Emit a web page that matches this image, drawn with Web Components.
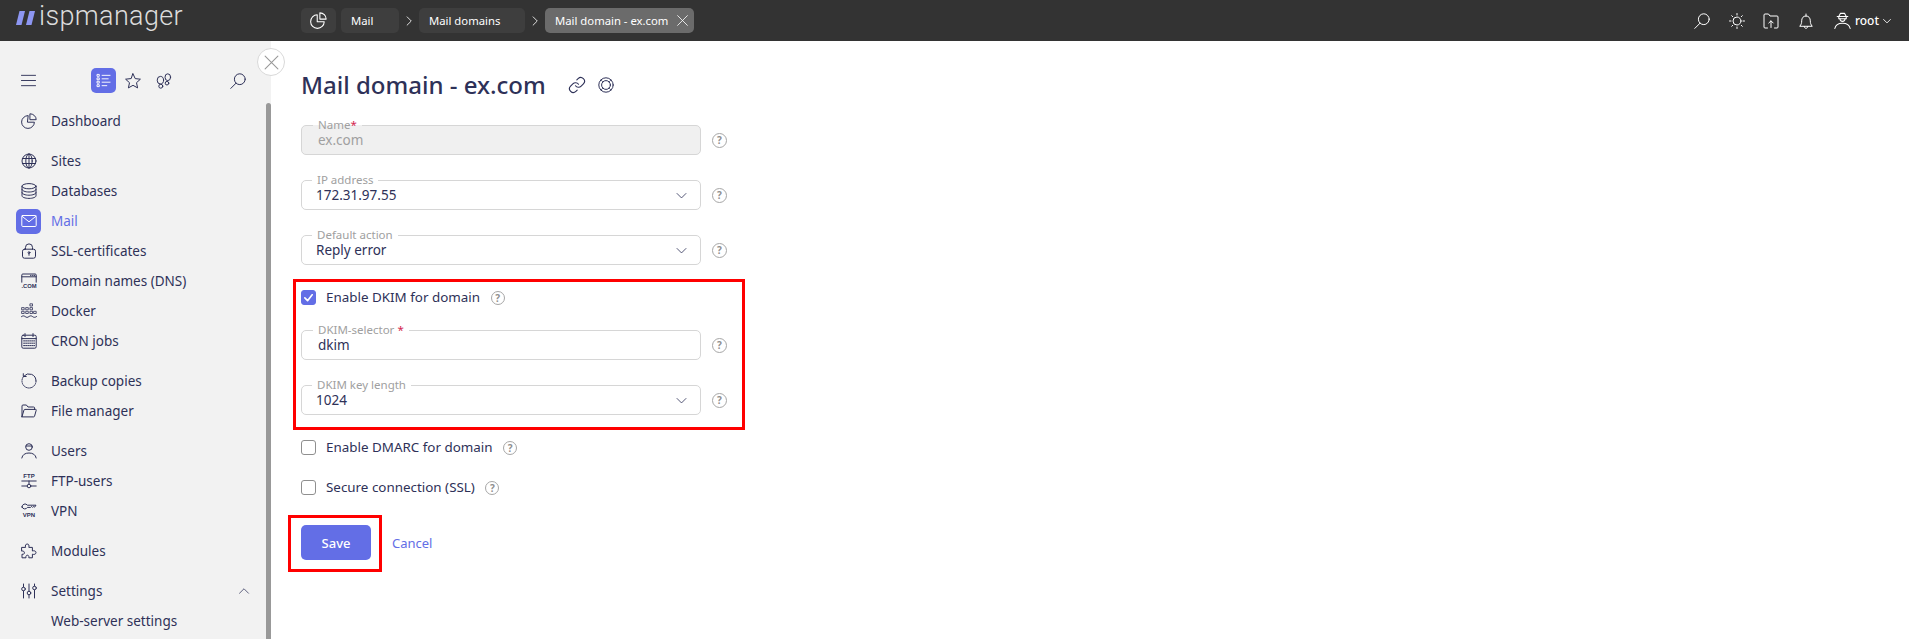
<!DOCTYPE html>
<html lang="en">
<head>
<meta charset="utf-8">
<title>Mail domain - ex.com</title>
<style>
  html, body { margin: 0; height: 100%; overflow: hidden; background: #fff; }
  body { font-family: "Noto Sans", "Liberation Sans", sans-serif; color: #2e3158; }
</style>
</head>
<body>
<isp-app></isp-app>

<script>
// ── Icons ─────────────────────────────────────────────────────────────────

const ICON_LABEL = 'font-family="Liberation Sans, sans-serif" font-weight="700" fill="currentColor" stroke="none"';

const ICONS = {
    pie: '<path d="M6.8 2.6a6.4 6.4 0 1 0 6.6 6.6H6.8z"/><path d="M9.3 .8a5.9 5.9 0 0 1 5.9 5.9H9.3z"/>',
    globe: '<circle cx="8" cy="8" r="7"/><ellipse cx="8" cy="8" rx="3.2" ry="7"/><path d="M8 1v14M1.5 5.5h13M1.5 10.5h13"/>',
    db: '<ellipse cx="8" cy="3.2" rx="7" ry="2.6"/><path d="M1 3.2v9.6c0 1.4 3.1 2.6 7 2.6s7-1.2 7-2.6V3.2M1 6.4c0 1.4 3.1 2.6 7 2.6s7-1.2 7-2.6M1 9.6c0 1.4 3.1 2.6 7 2.6s7-1.2 7-2.6"/>',
    mail: '<rect x=".8" y="2.5" width="14.4" height="11" rx="1"/><path d="M1 3.2l7 5.6 7-5.6"/>',
    lock: '<rect x="1.5" y="6.2" width="13" height="9" rx="2"/><path d="M4.5 6.2V4.4a3.5 3.5 0 0 1 7 0v1.8"/><circle cx="8" cy="9.6" r=".9"/><path d="M8 10.5v1.8"/>',
    dns: `<path d="M.8 9.2V2a1 1 0 0 1 1-1h12.4a1 1 0 0 1 1 1v7.2M.8 3.8h14.4"/><path d="M9.5 2.4h.6M11.5 2.4h.6M13.3 2.4h.5"/>
          <text x=".4" y="15.2" textLength="15.2" lengthAdjust="spacingAndGlyphs" font-size="5.6" ${ICON_LABEL}>.COM</text>`,
    docker: `<g stroke-width=".8"><rect x="9.3" y=".8" width="2.2" height="2.2"/>
             <rect x="1" y="4.6" width="2.2" height="2.2"/><rect x="5.1" y="4.6" width="2.2" height="2.2"/><rect x="9.3" y="4.6" width="2.2" height="2.2"/>
             <rect x="1" y="8.3" width="2.2" height="2.2"/><rect x="5.1" y="8.3" width="2.2" height="2.2"/><rect x="9.3" y="8.3" width="2.2" height="2.2"/><rect x="13" y="8.3" width="2.2" height="2.2"/></g>
             <path d="M.5 13.6c1.3-1 2.4-1 3.7 0s2.4 1 3.7 0 2.4-1 3.7 0 2.4 1 3.9 0"/>`,
    cal: '<rect x=".8" y="2.2" width="14.4" height="13" rx="1.4"/><path d="M.8 5.6h14.4M4 .6v3M12 .6v3"/><path stroke-dasharray="1.2 .9" d="M2.6 7.9h11M2.6 10.2h11M2.6 12.6h11"/>',
    backup: '<path d="M2.8 3.2A7 7 0 0 1 15 8"/><path stroke-dasharray="1 1.1" d="M15 8A7 7 0 0 1 1 8a7 7 0 0 1 1.8-4.8"/><path d="M2.3 .7v2.8h2.9"/>',
    folder: '<path d="M1 13.6V3a1 1 0 0 1 1-1h3.4l1.6 2h5.6a1 1 0 0 1 1 1v1.6"/><path d="M1 13.6L3 7a.9.9 0 0 1 .9-.6h10.6a.7.7 0 0 1 .7.9l-1.7 6a.9.9 0 0 1-.9.6H1z"/>',
    user: '<circle cx="8" cy="4" r="3.3"/><path d="M5 3h6"/><path d="M.8 15c.6-3.4 3.4-5 7.2-5s6.6 1.6 7.2 5"/>',
    ftp: `<text x="8" y="5.4" text-anchor="middle" font-size="6" ${ICON_LABEL}>FTP</text><path d="M.8 8h14.4M.8 13h5.3M9.9 13h5.3M8 8v3.2"/><circle cx="8" cy="13" r="1.8"/>`,
    vpn: `<path d="M1 4a3 3 0 0 1 5.4-1.8H15l-1.4 2-1-.8-1 1-1-1-1 1H6.4A3 3 0 0 1 1 4z"/><text x="8" y="14.4" text-anchor="middle" font-size="6" ${ICON_LABEL}>VPN</text>`,
    puzzle: '<path d="M1 4.4h3.6C4 2.6 4.6 1 6.2 1s2.2 1.6 1.6 3.4h3.6V8c1.8-.6 3.6 0 3.6 1.6s-1.8 2.2-3.6 1.6v3.6H7.8c.4-1.6-.2-2.6-1.4-2.6s-1.8 1-1.4 2.6H1v-3.6c1.4.4 2.4-.2 2.4-1.4S2.4 7.6 1 8z"/>',
    sliders: '<path d="M2.5 1v3M2.5 8v7M8 1v7M8 12v3M13.5 1v2M13.5 7v8"/><circle cx="2.5" cy="6" r="1.8"/><circle cx="8" cy="10" r="1.8"/><circle cx="13.5" cy="5" r="1.8"/>',
    menu: '<path d="M.5 2.5h15M.5 8h15M.5 13.5h15"/>',
    list: '<path d="M6.5 2.5H15M6.5 6.2H13M6.5 9.8H15M6.5 13.5h5"/><rect x="1.5" y="1.5" width="2" height="2"/><rect x="1.5" y="5.2" width="2" height="2"/><rect x="1.5" y="8.8" width="2" height="2"/><rect x="1.5" y="12.5" width="2" height="2"/>',
    star: '<path d="M8 .8l2.2 4.8 5.2.6-3.9 3.5 1.1 5.2L8 12.3l-4.6 2.6 1.1-5.2L.6 6.2l5.2-.6z"/>',
    steps: '<ellipse cx="4.4" cy="7.2" rx="3.2" ry="3.8"/><circle cx="4.8" cy="13.2" r="2"/><ellipse cx="11.8" cy="4.2" rx="2.8" ry="3.4"/><circle cx="11" cy="10.2" r="1.8"/>',
    search: '<circle cx="9.8" cy="6.2" r="5.4"/><path d="M6 10.2L.8 15.4"/>',
    link: '<g transform="scale(.667)" stroke-width="1.5"><path d="M10 13a5 5 0 0 0 7.54.54l3-3a5 5 0 0 0-7.07-7.07l-1.72 1.71"/><path d="M14 11a5 5 0 0 0-7.54-.54l-3 3a5 5 0 0 0 7.07 7.07l1.71-1.71"/></g>',
    buoy: '<circle cx="8" cy="8" r="7.2"/><circle cx="8" cy="8" r="4.4"/><path stroke-width=".7" d="M2.9 2.9l2 2M13.1 2.9l-2 2M2.9 13.1l2-2M13.1 13.1l-2-2"/>',
    sun: '<circle cx="8" cy="8" r="4"/><path d="M8 .5V2M8 14v1.5M.5 8H2M14 8h1.5M2.7 2.7l1 1M12.3 12.3l1 1M2.7 13.3l1-1M12.3 3.7l1-1"/>',
    upload: '<path d="M4.5 15H2a1 1 0 0 1-1-1V2a1 1 0 0 1 1-1h3.5L7 3h7a1 1 0 0 1 1 1v10a1 1 0 0 1-1 1h-2.5"/><path d="M8 14.5V8M5.8 10L8 7.8l2.2 2.200"/>',
    bell: '<path d="M2 13c1.3-1.500 1.700-3 1.700-5.200C3.700 5 5.300 3 8 3s4.300 2 4.300 4.800c0 2.200.4 3.700 1.700 5.200z"/><path d="M8 1v2M6.200 13.500c.2 1.200.9 1.800 1.800 1.800s1.600-.6 1.800-1.800"/>',
    root: '<path d="M4.500 6.400V4.200L6 1.300h4l1.500 2.900v2.200z"/><path d="M3 4.300h10M5.600 6.400c0 1.500 1 2.400 2.400 2.400s2.400-.9 2.400-2.400"/><path d="M.8 15.500c.6-3.400 3.400-5 7.200-5s6.600 1.600 7.200 5"/>',
    x: '<path d="M2 2l12 12M14 2L2 14"/>',
    down: '<path d="M2.500 5.500L8 11l5.500-5.500"/>',
    up: '<path d="M2 11l6-6 6 6"/>',
    right: '<path d="M5.500 2.500L11 8l-5.500 5.500"/>'
};

class IspIcon extends HTMLElement {
    connectedCallback() {
        const size = this.getAttribute('size') || 16;
        const stroke = this.getAttribute('stroke') || 1;
        this.attachShadow({ mode: 'open' }).innerHTML = `
            <style>
                :host { display: inline-flex; flex: none; width: ${size}px; height: ${size}px; }
                svg { display: block; width: 100%; height: 100%; overflow: visible; }
            </style>
            <svg viewBox="0 0 16 16" fill="none" stroke="currentColor" stroke-width="${stroke}"
                 stroke-linecap="round" stroke-linejoin="round">${ICONS[this.getAttribute('name')] || ''}</svg>`;
    }
}
customElements.define('isp-icon', IspIcon);

// ── Top bar ───────────────────────────────────────────────────────────────

class IspTab extends HTMLElement {
    connectedCallback() {
        this.attachShadow({ mode: 'open' }).innerHTML = `
            <style>
                :host {
                    display: flex; align-items: center; height: 25px; box-sizing: border-box;
                    padding: 0 10px; background: #3e3e3e; border-radius: 5px;
                    color: #fff; font-size: 11.3px; white-space: nowrap;
                }
                :host([active]) { background: #6b6b6b; padding-right: 5px; }
            </style>
            <slot></slot>`;
    }
}
customElements.define('isp-tab', IspTab);

class IspTopbar extends HTMLElement {
    connectedCallback() {
        this.attachShadow({ mode: 'open' }).innerHTML = `
            <style>
                :host {
                    display: flex; align-items: center; height: 41px; flex: none;
                    background: #333; color: #fff; box-sizing: border-box; padding: 0 17px 0 16px;
                }
                .logo { display: flex; align-items: center; width: 285px; }
                .slashes { width: 19px; height: 14px; margin-right: 4px; fill: #8d96f2; margin-top: -5px; }
                .name { font: 300 27px/32px Roboto, sans-serif; letter-spacing: .35px; color: #dcdcdc; margin-top: -9px; }
                .tabs { display: flex; align-items: center; }
                .sep { width: 20px; display: flex; justify-content: center; color: #e0e0e0; }
                .tools { margin-left: auto; display: flex; align-items: center; }
                .tools isp-icon { margin-right: 18.5px; }
                .tools .bell { margin-right: 20px; }
                .tools .user { margin-right: 4px; }
                .root { font-size: 12px; font-weight: 500; }
                .tools .caret { margin: 0 0 0 3px; }
            </style>
            <div class="logo">
                <svg class="slashes" viewBox="0 0 19 14"><path d="M3.500 0H9L5.500 14H0zM13.500 0H19l-3.500 14H10z"/></svg>
                <span class="name">ispmanager</span>
            </div>
            <div class="tabs">
                <isp-tab style="margin-right:5px;padding:0 9px"><isp-icon name="pie" size="17"></isp-icon></isp-tab>
                <isp-tab style="width:58px">Mail</isp-tab>
                <span class="sep"><isp-icon name="right" size="12" stroke="1.3"></isp-icon></span>
                <isp-tab style="width:106px">Mail domains</isp-tab>
                <span class="sep"><isp-icon name="right" size="12" stroke="1.3"></isp-icon></span>
                <isp-tab active style="width:149px">Mail domain - ex.com
                    <isp-icon name="x" size="13" style="margin-left:auto"></isp-icon></isp-tab>
            </div>
            <div class="tools">
                <isp-icon name="search" size="16"></isp-icon>
                <isp-icon name="sun" size="16"></isp-icon>
                <isp-icon name="upload" size="16"></isp-icon>
                <isp-icon class="bell" name="bell" size="16"></isp-icon>
                <isp-icon class="user" name="root" size="17"></isp-icon>
                <span class="root">root</span>
                <isp-icon class="caret" name="down" size="10" stroke="1.4"></isp-icon>
            </div>`;
    }
}
customElements.define('isp-topbar', IspTopbar);

// ── Sidebar ───────────────────────────────────────────────────────────────

class IspNavItem extends HTMLElement {
    connectedCallback() {
        const icon = this.getAttribute('icon');
        const iconHtml = icon ? `<isp-icon name="${icon}"></isp-icon>` : '';
        this.attachShadow({ mode: 'open' }).innerHTML = `
            <style>
                :host {
                    display: flex; align-items: center; height: 30px;
                    padding-left: 16px; font-size: 13.5px; color: #2e3158; white-space: nowrap;
                }
                .ico { display: flex; align-items: center; justify-content: center;
                       width: 25px; height: 25px; border-radius: 5px; margin-right: 10px; }
                .txt { margin-top: -1px; }
                :host([active]) { color: #636ee6; }
                :host([active]) .ico { background: #636ee6; color: #fff; }
                .tail { margin-left: auto; margin-right: 21px; display: flex; }
            </style>
            <span class="ico">${iconHtml}</span><span class="txt"><slot></slot></span>
            ${this.hasAttribute('open') ? '<span class="tail"><isp-icon name="up" size="12"></isp-icon></span>' : ''}`;
    }
}
customElements.define('isp-nav-item', IspNavItem);

class IspSidebar extends HTMLElement {
    connectedCallback() {
        this.attachShadow({ mode: 'open' }).innerHTML = `
            <style>
                :host {
                    display: block; flex: none; width: 271px; background: #f2f2f2;
                    position: relative; overflow: hidden; box-sizing: border-box; padding-top: 27px;
                }
                .tools { display: flex; align-items: center; height: 25px; padding-left: 21px; margin-bottom: 13px; }
                .view { display: flex; align-items: center; justify-content: center;
                        width: 25px; height: 25px; margin-left: 55px; border-radius: 5px;
                        background: #636ee6; color: #fff; }
                .star { margin-left: 9px; }
                .steps { margin-left: 15px; }
                .find { margin-left: 58px; }
                .group { margin-bottom: 10px; }
                .thumb { position: absolute; right: 0; top: 62px; bottom: 0; width: 5px;
                         background: #999; border-radius: 3px 3px 0 0; }
            </style>
            <div class="tools">
                <isp-icon name="menu" size="15"></isp-icon>
                <span class="view"><isp-icon name="list" size="15"></isp-icon></span>
                <isp-icon class="star" name="star" size="16"></isp-icon>
                <isp-icon class="steps" name="steps" size="16"></isp-icon>
                <isp-icon class="find" name="search" size="16"></isp-icon>
            </div>
            <div class="group">
                <isp-nav-item icon="pie">Dashboard</isp-nav-item>
            </div>
            <div class="group">
                <isp-nav-item icon="globe">Sites</isp-nav-item>
                <isp-nav-item icon="db">Databases</isp-nav-item>
                <isp-nav-item icon="mail" active>Mail</isp-nav-item>
                <isp-nav-item icon="lock">SSL-certificates</isp-nav-item>
                <isp-nav-item icon="dns">Domain names (DNS)</isp-nav-item>
                <isp-nav-item icon="docker">Docker</isp-nav-item>
                <isp-nav-item icon="cal">CRON jobs</isp-nav-item>
            </div>
            <div class="group">
                <isp-nav-item icon="backup">Backup copies</isp-nav-item>
                <isp-nav-item icon="folder">File manager</isp-nav-item>
            </div>
            <div class="group">
                <isp-nav-item icon="user">Users</isp-nav-item>
                <isp-nav-item icon="ftp">FTP-users</isp-nav-item>
                <isp-nav-item icon="vpn">VPN</isp-nav-item>
            </div>
            <div class="group">
                <isp-nav-item icon="puzzle">Modules</isp-nav-item>
            </div>
            <div class="group">
                <isp-nav-item icon="sliders" open>Settings</isp-nav-item>
                <isp-nav-item>Web-server settings</isp-nav-item>
            </div>
            <div class="thumb"></div>`;
    }
}
customElements.define('isp-sidebar', IspSidebar);

// ── Form parts ────────────────────────────────────────────────────────────

class IspHelp extends HTMLElement {
    connectedCallback() {
        this.attachShadow({ mode: 'open' }).innerHTML = `
            <style>
                :host {
                    display: inline-flex; align-items: center; justify-content: center; flex: none;
                    width: var(--help-size, 15px); height: var(--help-size, 15px); box-sizing: border-box;
                    border: 1px solid #a6a6a6; border-radius: 50%;
                    color: #8f8f8f; font-size: 10px; font-weight: 700; line-height: 1;
                }
            </style>?`;
    }
}
customElements.define('isp-help', IspHelp);

class IspField extends HTMLElement {
    connectedCallback() {
        const label = this.getAttribute('label');
        const value = this.getAttribute('value');
        const req = this.hasAttribute('required') ? '<b>*</b>' : '';
        const select = this.hasAttribute('select');
        this.attachShadow({ mode: 'open' }).innerHTML = `
            <style>
                :host { display: flex; align-items: center; }
                .box {
                    position: relative; display: flex; align-items: center; width: 400px; height: 30px;
                    box-sizing: border-box; border: 1px solid #d6d6d6; border-radius: 5px;
                    padding: 0 12px 0 ${select ? 14 : 16}px; font-size: 13.5px; color: #2e3158; background: #fff;
                }
                .lbl {
                    position: absolute; left: ${select ? 10 : 11}px; top: -7px; padding: 0 5px;
                    font-size: 11.5px; line-height: 12px; color: #a0a0a0; background: #fff; white-space: nowrap;
                }
                .lbl b { color: #d3264f; font-weight: 400; }
                .value { flex: 1; }
                .caret { color: #2e3158; }
                :host([disabled]) .box { background: #f0f0f0; color: #a0a0a0; }
                :host([disabled]) .lbl { background: linear-gradient(#fff 50%, #f0f0f0 50%); }
                isp-help { margin-left: 11px; }
            </style>
            <div class="box">
                <span class="lbl">${label}${req}</span>
                <span class="value">${value}</span>
                ${select ? '<isp-icon class="caret" name="down" size="13"></isp-icon>' : ''}
            </div>
            <isp-help></isp-help>`;
    }
}
customElements.define('isp-field', IspField);

class IspCheck extends HTMLElement {
    connectedCallback() {
        const on = this.hasAttribute('checked');
        this.attachShadow({ mode: 'open' }).innerHTML = `
            <style>
                :host { display: flex; align-items: center; height: 15px; font-size: 13.4px; color: #2e3158; white-space: nowrap; }
                .box {
                    width: 15px; height: 15px; box-sizing: border-box; flex: none; margin-right: 10px;
                    border: 1px solid #8f8f8f; border-radius: 3px; background: #fff;
                    display: flex; align-items: center; justify-content: center;
                }
                .box.on { background: #636ee6; border-color: #636ee6; }
                svg { width: 11px; height: 11px; }
                .txt { margin-top: -2px; }
                isp-help { margin-left: 10.5px; --help-size: 14px; }
            </style>
            <span class="box ${on ? 'on' : ''}">
                ${on ? '<svg viewBox="0 0 12 12" fill="none" stroke="#fff" stroke-width="1.8" stroke-linecap="round" stroke-linejoin="round"><path d="M2 6.500l3 3 5-6.500"/></svg>' : ''}
            </span>
            <span class="txt"><slot></slot></span>
            <isp-help></isp-help>`;
    }
}
customElements.define('isp-check', IspCheck);

// Red annotation frame drawn round a part of the form
class IspMark extends HTMLElement {
    connectedCallback() {
        this.attachShadow({ mode: 'open' }).innerHTML = `
            <style>
                :host { display: block; box-sizing: border-box; border: 3px solid #f00; }
            </style>
            <slot></slot>`;
    }
}
customElements.define('isp-mark', IspMark);

class IspButton extends HTMLElement {
    connectedCallback() {
        this.attachShadow({ mode: 'open' }).innerHTML = `
            <style>
                :host {
                    display: flex; align-items: center; justify-content: center;
                    width: 70px; height: 35px; border-radius: 5px;
                    background: #636ee6; color: #fff; font-size: 13px; font-weight: 500;
                }
            </style>
            <slot></slot>`;
    }
}
customElements.define('isp-button', IspButton);

// ── Page ──────────────────────────────────────────────────────────────────

class IspFormPage extends HTMLElement {
    connectedCallback() {
        this.attachShadow({ mode: 'open' }).innerHTML = `
            <style>
                :host { display: block; flex: 1; position: relative; background: #fff; padding: 29px 0 0 30px; color: #2e3158; }
                .close {
                    position: absolute; left: -14px; top: 7px; width: 28px; height: 28px; box-sizing: border-box;
                    display: flex; align-items: center; justify-content: center;
                    background: #fff; border: 1px solid #d9d9d9; border-radius: 50%; color: #999;
                }
                .head { display: flex; align-items: center; height: 30px; margin-bottom: 25px; }
                h1 { margin: -2px 0 0; font-size: 24px; font-weight: 500; white-space: nowrap; }
                .head .a { margin-left: 22.5px; }
                .head .b { margin-left: 12px; }
                .form { display: flex; flex-direction: column; gap: 25px; }
                .dkim {
                    display: flex; flex-direction: column; gap: 25px; width: 452px;
                    margin: -11px 0 -15px -8px; padding: 8px 0 12px 5px;
                }
                .actions { display: flex; align-items: center; margin: -5px 0 0 -13px; }
                .save { padding: 7px 8px 9px 10px; }
                .cancel { margin: -2px 0 0 10px; color: #636ee6; font-size: 13px; }
            </style>
            <span class="close"><isp-icon name="x" size="17"></isp-icon></span>
            <div class="head">
                <h1>Mail domain - ex.com</h1>
                <isp-icon class="a" name="link" size="18"></isp-icon>
                <isp-icon class="b" name="buoy" size="16"></isp-icon>
            </div>
            <div class="form">
                <isp-field label="Name" required value="ex.com" disabled></isp-field>
                <isp-field label="IP address" value="172.31.97.55" select></isp-field>
                <isp-field label="Default action" value="Reply error" select></isp-field>
                <isp-mark class="dkim">
                    <isp-check checked>Enable DKIM for domain</isp-check>
                    <isp-field label="DKIM-selector " required value="dkim"></isp-field>
                    <isp-field label="DKIM key length" value="1024" select></isp-field>
                </isp-mark>
                <isp-check>Enable DMARC for domain</isp-check>
                <isp-check>Secure connection (SSL)</isp-check>
                <div class="actions">
                    <isp-mark class="save"><isp-button>Save</isp-button></isp-mark>
                    <span class="cancel">Cancel</span>
                </div>
            </div>`;
    }
}
customElements.define('isp-form-page', IspFormPage);

class IspApp extends HTMLElement {
    connectedCallback() {
        this.attachShadow({ mode: 'open' }).innerHTML = `
            <style>
                :host { display: flex; flex-direction: column; height: 100vh; overflow: hidden; }
                .body { display: flex; flex: 1; min-height: 0; }
            </style>
            <isp-topbar></isp-topbar>
            <div class="body">
                <isp-sidebar></isp-sidebar>
                <isp-form-page></isp-form-page>
            </div>`;
    }
}
customElements.define('isp-app', IspApp);
</script>
</body>
</html>
